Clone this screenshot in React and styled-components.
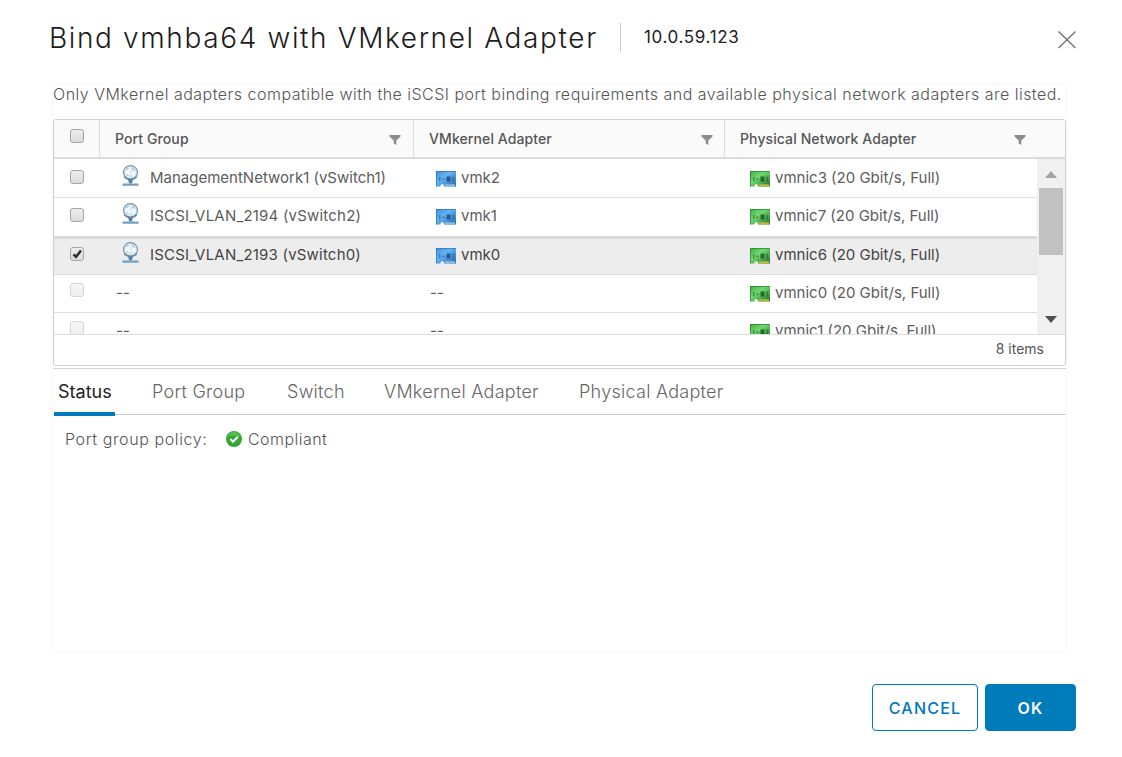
import React from "react";
import styled, { createGlobalStyle, css } from "styled-components";

const GlobalStyle = createGlobalStyle`
  * { box-sizing: border-box; }
  body {
    margin: 0;
    background: #fff;
    color: #666;
    font-family: Inter, "Liberation Sans", sans-serif;
    overflow: hidden;
  }
`;

const Dialog = styled.div`
  width: 1122px;
  height: 757px;
  padding: 0 46px 0 50px;
  display: flex;
  flex-direction: column;
  background: #fff;
`;

const Header = styled.header`
  height: 84px;
  display: flex;
  align-items: flex-start;
`;

const Title = styled.h1`
  margin: 0;
  padding-top: 20px;
  width: 570px;
  font-size: 28px;
  font-weight: 300;
  line-height: 36px;
  letter-spacing: 1.63px;
  text-indent: -1px;
  color: #1c1c1c;
  white-space: nowrap;
`;

const HostName = styled.span`
  margin-top: 23px;
  height: 29px;
  padding-left: 23px;
  border-left: 1px solid #ccc;
  font-size: 17px;
  line-height: 28px;
  letter-spacing: 0.65px;
  color: #222;
`;

const CloseButton = styled.button`
  margin: 30px 0 0 auto;
  padding: 0;
  width: 20px;
  height: 20px;
  border: 0;
  background: none;
  svg { display: block; }
`;

const Content = styled.main`
  width: 1015px;
  height: 569px;
  margin-left: 2px;
  border: 1px solid #f8f8f8;
  display: flex;
  flex-direction: column;
`;

const Description = styled.p`
  margin: 0;
  height: 34px;
  font-size: 16px;
  font-weight: 300;
  line-height: 18px;
  color: #555;
  letter-spacing: 0.485px;
  white-space: nowrap;
`;

const Grid = styled.section`
  width: 1013px;
  height: 247px;
  border: 1px solid #d0d0d0;
  border-radius: 3px;
  display: flex;
  flex-direction: column;
  overflow: hidden;
`;

const columns = css`
  display: grid;
  grid-template-columns: 45px 314px 311px 1fr;
`;

const HeadRow = styled.div`
  ${columns}
  height: 39px;
  flex: none;
  background: #fafafa;
  border-bottom: 2px solid #dcdcdc;
`;

const HeadCell = styled.div`
  display: flex;
  align-items: center;
  justify-content: space-between;
  padding: 0 ${(p) => p.$right || 12}px 0 15px;
  border-left: 1px solid #ddd;
  font-size: 14px;
  font-weight: 500;
  letter-spacing: 0.1px;
  color: #555;
  white-space: nowrap;
  svg { margin-top: 3px; }
`;

const CheckCell = styled.div`
  padding: ${(p) => p.$top}px 0 0 16px;
`;

const CheckBox = styled.span`
  display: block;
  width: 14px;
  height: 14px;
  border: 1px solid #a5a5a5;
  border-radius: 3px;
  background: linear-gradient(#ededed, #dcdcdc);
  opacity: ${(p) => (p.$disabled ? 0.45 : 1)};
  svg { display: block; overflow: visible; }
`;

const Body = styled.div`
  height: 175px;
  flex: none;
  display: flex;
`;

const Rows = styled.div`
  width: 983px;
  height: 175px;
  padding-top: 1px;
  overflow: hidden;
`;

const Row = styled.div`
  ${columns}
  height: 38.3px;
  border-bottom: 1px solid #ddd;
  background: ${(p) => (p.$selected ? "#ededed" : "#fff")};
  box-shadow: ${(p) => (p.$selected ? "inset 0 2px 2px -1px #c8c8c8" : "none")};
  color: ${(p) => (p.$selected ? "#444" : "#5c5c5c")};
`;

const Cell = styled.div`
  display: flex;
  align-items: flex-start;
  padding-left: ${(p) => p.$left}px;
  font-size: 15px;
  line-height: 36px;
  letter-spacing: ${(p) => p.$spacing || 0}px;
  white-space: nowrap;
  svg { flex: none; }
`;

const IconBox = styled.span`
  display: block;
  line-height: 0;
  padding-top: ${(p) => p.$top}px;
  width: ${(p) => p.$width}px;
`;

const Scrollbar = styled.div`
  width: 28px;
  height: 175px;
  background: #f0f0f0;
  display: flex;
  flex-direction: column;
  align-items: center;
  padding: 12px 0 11px;
`;

const Thumb = styled.div`
  width: 24px;
  height: 67px;
  margin: 10px 0 auto;
  background: #c1c1c1;
`;

const Arrow = styled.span`
  border: 6px solid transparent;
  border-top-width: ${(p) => (p.$up ? 0 : 7)}px;
  border-bottom-width: ${(p) => (p.$up ? 7 : 0)}px;
  border-${(p) => (p.$up ? "bottom" : "top")}-color: ${(p) => (p.$up ? "#a3a3a3" : "#505050")};
`;

const GridFooter = styled.div`
  flex: 1;
  border-top: 1px solid #ddd;
  padding-right: 21px;
  text-align: right;
  font-size: 14px;
  line-height: 28px;
  color: #555;
`;

const Tabs = styled.nav`
  margin-top: 2px;
  height: 47px;
  flex: none;
  border-top: 1px solid #d4d4d4;
  border-bottom: 1px solid #ccc;
  display: flex;
  gap: 33px;
  padding-left: 1px;
`;

const Tab = styled.button`
  height: 47px;
  width: ${(p) => p.$width}px;
  padding: 3px 0 0 4px;
  border: 0;
  border-bottom: 4px solid ${(p) => (p.$active ? "#007cbb" : "transparent")};
  background: none;
  font: ${(p) => (p.$active ? 400 : 300)} 18px/40px Inter, "Liberation Sans", sans-serif;
  text-align: left;
  white-space: nowrap;
  letter-spacing: ${(p) => (p.$active ? 0 : 0.27)}px;
  color: ${(p) => (p.$active ? "#222" : "#666")};
`;

const Status = styled.div`
  display: flex;
  align-items: center;
  padding: 14px 0 0 12px;
  height: 34px;
  font-size: 16px;
  font-weight: 300;
  color: #555;
`;

const StatusLabel = styled.span`
  width: 161px;
  letter-spacing: 0.6px;
`;

const StatusValue = styled.span`
  display: flex;
  align-items: center;
  gap: 6px;
  letter-spacing: 0.45px;
`;

const Actions = styled.footer`
  display: flex;
  justify-content: flex-end;
  gap: 7px;
  margin-top: 31px;
`;

const Button = styled.button`
  height: 47px;
  width: ${(p) => (p.$primary ? 91 : 106)}px;
  padding: 0;
  border: 1px solid #0079b8;
  border-radius: 4px;
  background: ${(p) => (p.$primary ? "#007cbb" : "#fff")};
  color: ${(p) => (p.$primary ? "#fff" : "#0079b8")};
  font: ${(p) => (p.$primary ? 600 : 500)} 16px Inter, "Liberation Sans", sans-serif;
  letter-spacing: 1.2px;
`;

const FilterIcon = () => (
  <svg width="12" height="10" viewBox="0 0 12 10">
    <path d="M.5 0h11v1.500L7.300 5.500V10L4.700 8.500v-3L.5 1.500z" fill="#8c8c8c" />
  </svg>
);

const CheckMark = () => (
  <svg width="12" height="12" viewBox="0 0 12 12">
    <path d="M2.500 6.300L5 8.800L10 2.500" fill="none" stroke="#303030" strokeWidth="2.600" />
  </svg>
);

const GlobeIcon = () => (
  <svg width="17" height="22" viewBox="0 0 17 22">
    <circle cx="8.500" cy="7.600" r="7" fill="#d6e8f3" stroke="#7f98aa" strokeWidth="1.200" />
    <path d="M3.500 5L7 2.200l2 1.300-1.500 3 1.500 2-2 3.500-3.500-3.500z" fill="#f4fafd" />
    <path d="M10.500 5.500l3 .5v3l-2.500 2.500-1.500-3z" fill="#f4fafd" />
    <path d="M4.500 4.500l2-1M10.500 3.500l2 1.500M5 9.500l1.500 1.500" stroke="#7ba0ba" strokeWidth="1" />
    <path d="M2.200 11.500c2.500 3.500 10 3.500 12.500 0" fill="none" stroke="#67869f" strokeWidth="1.400" />
    <path d="M6 14.500h5L9.800 18.500H7.200z" fill="#5580a3" />
    <path d="M.5 18.500h16v2.200H.5z" fill="#6e9fc4" />
  </svg>
);

const CardIcon = ({ kind }) => {
  const [light, mid, dark, foot, chip] =
    kind === "vmk"
      ? ["#62b4f4", "#3d90dd", "#2468b0", "#8cbbdc", "#1b4674"]
      : ["#6fda70", "#41ad3e", "#226f2c", "#b9b93d", "#154d20"];
  return (
    <svg width="20" height="16" viewBox="0 0 20 16">
      <defs>
        <linearGradient id={`card-${kind}`} x1="0" y1="0" x2="1" y2="1">
          <stop offset="0" stopColor={mid} />
          <stop offset=".4" stopColor={light} />
          <stop offset="1" stopColor={dark} />
        </linearGradient>
      </defs>
      <path d="M0 0h20v15.500H8V14l-1.700-1L4.500 14v1.500H0z" fill={`url(#card-${kind})`} />
      <path d="M.5 15.500V.5h19" fill="none" stroke={dark} strokeOpacity=".6" />
      <path d="M9 13.200H19v2.300H9z" fill={foot} />
      <path d="M3 6h1.500v4.500H3zM6 7.500h2.500v1.500H6zM16.500 5.500H18v5h-1.500z" fill={chip} fillOpacity=".5" />
      <path d="M10.500 5.500h4v5h-4z" fill={chip} fillOpacity=".75" />
    </svg>
  );
};

const CompliantIcon = () => (
  <svg width="16" height="16" viewBox="0 0 16 16">
    <circle cx="8" cy="8" r="8" fill="#35a535" />
    <path d="M1.500 6a6.700 6.700 0 0 1 13 0q-6-3-13 0" fill="#52bf4a" />
    <path d="M4.300 8l2.700 2.800 4.800-5" fill="none" stroke="#fff" strokeWidth="2" />
  </svg>
);

const adapters = [
  { group: "ManagementNetwork1 (vSwitch1)", vmk: "vmk2", nic: "vmnic3 (20 Gbit/s, Full)", spacing: 0 },
  { group: "ISCSI_VLAN_2194 (vSwitch2)", vmk: "vmk1", nic: "vmnic7 (20 Gbit/s, Full)", spacing: 0.2 },
  { group: "ISCSI_VLAN_2193 (vSwitch0)", vmk: "vmk0", nic: "vmnic6 (20 Gbit/s, Full)", spacing: 0.2, selected: true },
  { nic: "vmnic0 (20 Gbit/s, Full)" },
  { nic: "vmnic1 (20 Gbit/s, Full)" },
];

const AdapterRow = ({ group, vmk, nic, spacing, selected }) => (
  <Row $selected={selected}>
    <CheckCell $top={group ? 10 : 8}>
      <CheckBox $disabled={!group}>{selected && <CheckMark />}</CheckBox>
    </CheckCell>
    <Cell $left={group ? 23 : 17} $spacing={spacing}>
      {group && <IconBox $top={5} $width={28}><GlobeIcon /></IconBox>}
      {group || "--"}
    </Cell>
    <Cell $left={vmk ? 23 : 17}>
      {vmk && <IconBox $top={11} $width={25}><CardIcon kind="vmk" /></IconBox>}
      {vmk || "--"}
    </Cell>
    <Cell $left={26}>
      <IconBox $top={11} $width={25}><CardIcon kind="nic" /></IconBox>
      {nic}
    </Cell>
  </Row>
);

export default function App() {
  return (
    <Dialog>
      <GlobalStyle />
      <Header>
        <Title>Bind vmhba64 with VMkernel Adapter</Title>
        <HostName>10.0.59.123</HostName>
        <CloseButton aria-label="Close">
          <svg width="20" height="20" viewBox="0 0 20 20">
            <path d="M2.500 1.500l17 16.500M19.500 1.500L2.500 18" stroke="#777" strokeWidth="1.500" />
          </svg>
        </CloseButton>
      </Header>
      <Content>
        <Description>
          Only VMkernel adapters compatible with the iSCSI port binding requirements and available physical network adapters are listed.
        </Description>
        <Grid>
          <HeadRow>
            <CheckCell $top={9}><CheckBox /></CheckCell>
            <HeadCell>Port Group<FilterIcon /></HeadCell>
            <HeadCell $right={11}>VMkernel Adapter<FilterIcon /></HeadCell>
            <HeadCell $right={39}>Physical Network Adapter<FilterIcon /></HeadCell>
          </HeadRow>
          <Body>
            <Rows>
              {adapters.map((a) => <AdapterRow key={a.nic} {...a} />)}
            </Rows>
            <Scrollbar>
              <Arrow $up />
              <Thumb />
              <Arrow />
            </Scrollbar>
          </Body>
          <GridFooter>8 items</GridFooter>
        </Grid>
        <Tabs>
          <Tab $active $width={61}>Status</Tab>
          <Tab $width={102}>Port Group</Tab>
          <Tab $width={64}>Switch</Tab>
          <Tab $width={162}>VMkernel Adapter</Tab>
          <Tab $width={150}>Physical Adapter</Tab>
        </Tabs>
        <Status>
          <StatusLabel>Port group policy:</StatusLabel>
          <StatusValue><CompliantIcon />Compliant</StatusValue>
        </Status>
      </Content>
      <Actions>
        <Button>CANCEL</Button>
        <Button $primary>OK</Button>
      </Actions>
    </Dialog>
  );
}
